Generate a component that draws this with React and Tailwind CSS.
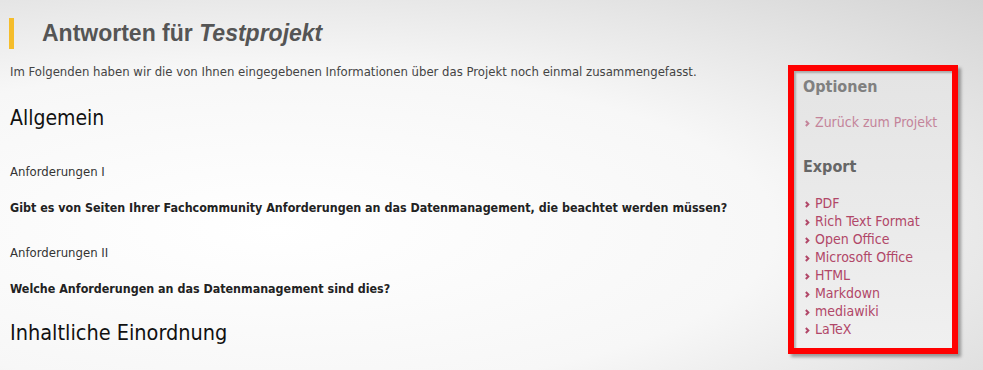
const EXPORTS = ['PDF', 'Rich Text Format', 'Open Office', 'Microsoft Office', 'HTML', 'Markdown', 'mediawiki', 'LaTeX']

function Chevron() {
  return (
    <svg viewBox="0 0 6 8" className="ml-[2px] mr-[5px] mt-[2px] inline-block h-[7px] w-[5px] shrink-0" aria-hidden="true">
      <path d="M1 1l3 3-3 3" fill="none" stroke="currentColor" strokeWidth="2.4" />
    </svg>
  )
}

function SideLink({ label, light }) {
  return (
    <a href="#" className={`flex items-center leading-[18px] ${light ? 'text-[#c4849a]' : 'text-[#b14768]'}`}>
      <Chevron />
      {label}
    </a>
  )
}

export default function App() {
  return (
    <div className="h-[370px] w-[983px] overflow-hidden bg-radial-[at_28%_62%] from-white via-[#f7f7f7] to-[#d4d4d4] font-['DejaVu_Sans_Condensed','DejaVu_Sans',sans-serif] text-[#222]">
      <div className="flex">
        <main className="flex-1 pl-[9px]">
          <h1 className="mt-[18px] flex h-[31px] items-center border-l-[5px] border-[#f5bd2b] pl-[28px] font-['Liberation_Sans',sans-serif] text-[23px] font-bold text-[#555]">
            Antworten für&nbsp;<em>Testprojekt</em>
          </h1>
          <p className="mt-[14px] pl-[1px] text-[13px] leading-[18px] text-[#444]">
            Im Folgenden haben wir die von Ihnen eingegebenen Informationen über das Projekt noch einmal zusammengefasst.
          </p>

          <h2 className="mt-[23px] pl-[1px] text-[21px] leading-[28px] text-[#111]">Allgemein</h2>

          <h3 className="mt-[31px] pl-[1px] text-[13px] leading-[18px] text-[#333]">Anforderungen I</h3>
          <p className="mt-[18px] pl-[1px] text-[12.4px] font-bold leading-[18px] text-[#222]">
            Gibt es von Seiten Ihrer Fachcommunity Anforderungen an das Datenmanagement, die beachtet werden müssen?
          </p>

          <h3 className="mt-[27px] pl-[1px] text-[13px] leading-[18px] text-[#333]">Anforderungen II</h3>
          <p className="mt-[18px] pl-[1px] text-[12.4px] font-bold leading-[18px] text-[#222]">
            Welche Anforderungen an das Datenmanagement sind dies?
          </p>

          <h2 className="mt-[21px] pl-[1px] text-[21.5px] leading-[28px] text-[#111]">Inhaltliche Einordnung</h2>
        </main>

        <aside className="mr-[25px] mt-[65px] h-[289px] w-[170px] border-[6px] border-[#ff0000] shadow-[3px_3px_3px_rgba(0,0,0,0.35)]">
          <div className="h-full bg-gradient-to-b from-[#e4e4e4] to-[#f0f0f0] px-[9px] pt-[5px] text-[14px] shadow-[inset_2px_2px_2px_rgba(0,0,0,0.25)]">
            <h4 className="text-[16px] font-bold leading-[22px] text-[#808080]">Optionen</h4>
            <div className="mt-[15px]">
              <SideLink label="Zurück zum Projekt" light />
            </div>
            <h4 className="mt-[25px] text-[16px] font-bold leading-[22px] text-[#666]">Export</h4>
            <div className="mt-[16px]">
              {EXPORTS.map((label) => (
                <SideLink key={label} label={label} />
              ))}
            </div>
          </div>
        </aside>
      </div>
    </div>
  )
}
